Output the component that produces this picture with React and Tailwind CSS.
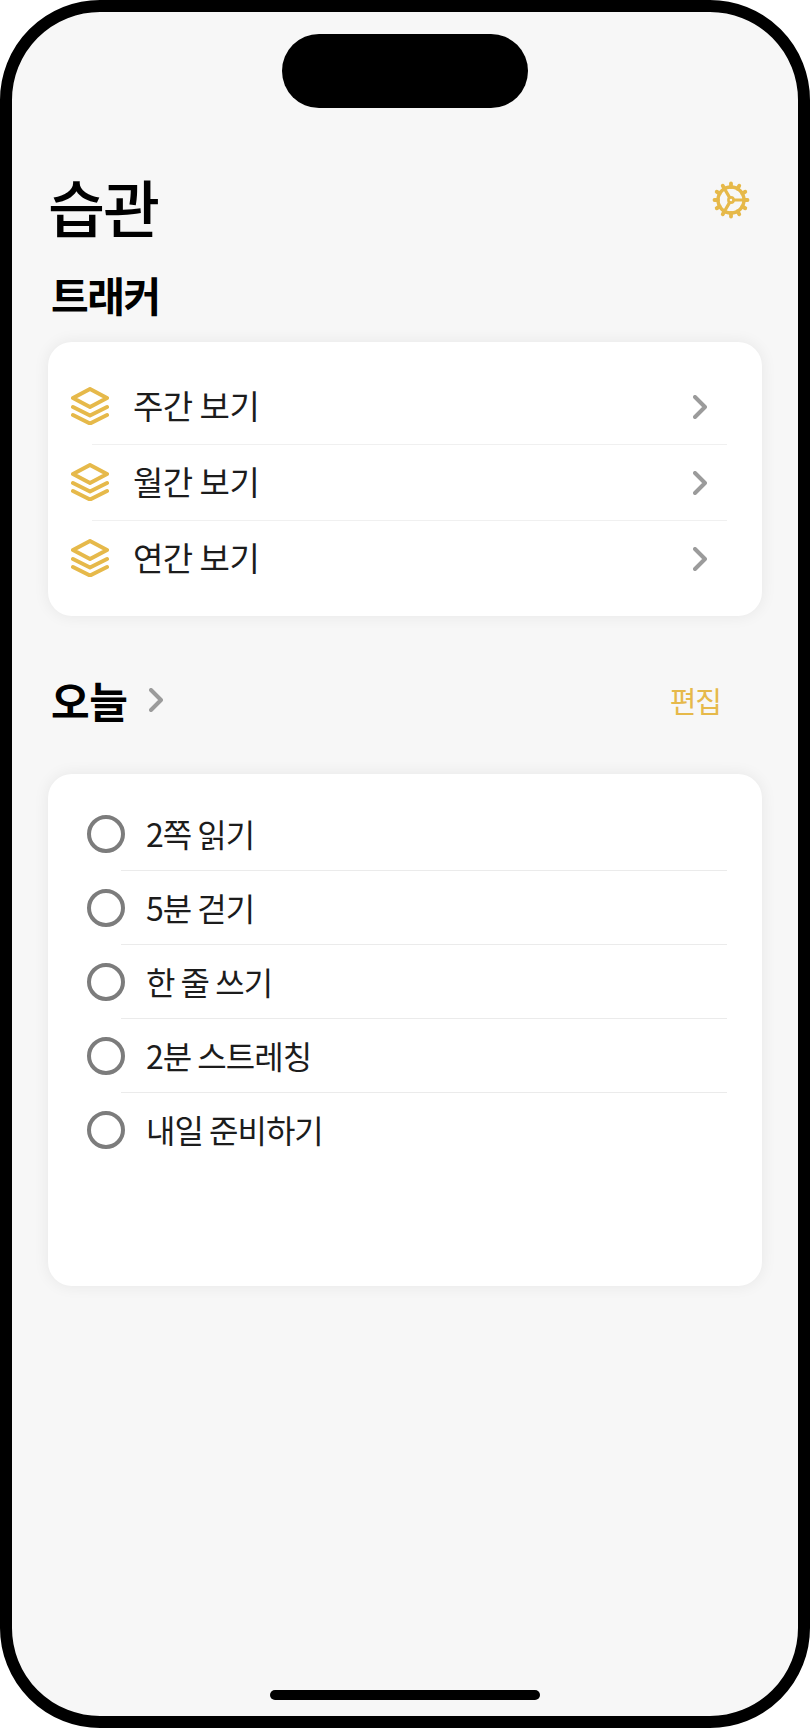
const GOLD = '#e6b94a'

function Gear() {
  const teeth = [...Array(12)].map((_, i) => i * 30)
  return (
    <svg width="38" height="38" viewBox="0 0 38 38" fill="none" stroke={GOLD} strokeLinecap="round">
      <circle cx="19" cy="19" r="13" strokeWidth="3.4" />
      {teeth.map(a => (
        <line key={a} x1="19" y1="2.5" x2="19" y2="6" strokeWidth="3.8" transform={`rotate(${a} 19 19)`} />
      ))}
      <circle cx="19" cy="19" r="2.6" strokeWidth="2.6" />
      <line x1="22" y1="19" x2="32" y2="19" strokeWidth="3.2" />
      <line x1="17.5" y1="16.4" x2="12.5" y2="7.8" strokeWidth="3.2" />
      <line x1="17.5" y1="21.6" x2="12.5" y2="30.2" strokeWidth="3.2" />
    </svg>
  )
}

function Layers() {
  return (
    <svg width="38" height="38" viewBox="0 0 38 38" fill="none" stroke={GOLD} strokeWidth="4" strokeLinecap="round" strokeLinejoin="round" className="mb-[2px] shrink-0">
      <path d="M19 2 L36 11 L19 20 L2 11 Z" />
      <path d="M2 20 L19 28.5 L36 20" />
      <path d="M2 28 L19 36.5 L36 28" />
    </svg>
  )
}

function Chevron() {
  return (
    <svg width="14" height="24" viewBox="0 0 14 24" fill="none" stroke="#9b9b9b" strokeWidth="4" strokeLinecap="round" strokeLinejoin="round">
      <path d="M2 2 L12 12 L2 22" />
    </svg>
  )
}

const views = ['주간 보기', '월간 보기', '연간 보기']
const habits = ['2쪽 읽기', '5분 걷기', '한 줄 쓰기', '2분 스트레칭', '내일 준비하기']

export default function App() {
  return (
    <div
      className="relative h-[1728px] w-[810px] overflow-hidden rounded-[100px] border-[12px] border-black bg-[#f7f7f7]"
      style={{ fontFamily: '"Noto Sans CJK KR", "Noto Sans", sans-serif' }}
    >
      {/* Dynamic island */}
      <div className="absolute left-[270px] top-[22px] h-[74px] w-[246px] rounded-[37px] bg-black" />

      <div className="flex flex-col px-[36px] pt-[158px]">
        {/* Header */}
        <div className="flex items-start justify-between">
          <h1 className="text-[62px] leading-[72px] font-medium tracking-[-2px] text-black">습관</h1>
          <div className="mr-[12px] mt-[11px]"><Gear /></div>
        </div>
        <h2 className="ml-[3px] mt-[24px] text-[41px] leading-[56px] font-bold tracking-[-1.5px] text-black">트래커</h2>

        {/* Tracker card */}
        <div className="mt-[20px] h-[274px] rounded-[24px] bg-white py-[27px] pl-[23px] pr-[35px] shadow-[0_0_16px_rgba(0,0,0,0.07)]">
          {views.map((label, i) => (
            <div key={label} className="relative flex h-[76px] items-center">
              <Layers />
              <span className="mb-[4px] ml-[24px] text-[33px] leading-[44px] tracking-[-0.5px] text-[#1c1c1c]">{label}</span>
              <div className="ml-auto mr-[20px] flex"><Chevron /></div>
              {i < views.length - 1 && <div className="absolute bottom-0 left-[21px] right-0 h-[1px] bg-[#f0f0f0]" />}
            </div>
          ))}
        </div>

        {/* Today header */}
        <div className="mt-[56px] flex h-[56px] items-center">
          <h2 className="ml-[3px] text-[42px] leading-[56px] font-bold tracking-[-0.5px] text-black">오늘</h2>
          <div className="ml-[22px] flex"><Chevron /></div>
          <span className="ml-auto mr-[41px] text-[29px] leading-[40px] tracking-[-1px] text-[#e6b94a]">편집</span>
        </div>

        {/* Habit card */}
        <div className="mt-[46px] h-[512px] rounded-[24px] bg-white pl-[39px] pr-[35px] pt-[23px] shadow-[0_0_16px_rgba(0,0,0,0.07)]">
          {habits.map((habit, i) => (
            <div key={habit} className="relative flex h-[74px] items-center">
              <div className="h-[38px] w-[38px] shrink-0 rounded-full border-[4px] border-[#7c7c7c]" />
              <span className="mb-[3px] ml-[21px] text-[32px] leading-[44px] tracking-[-1px] text-[#1c1c1c]">{habit}</span>
              {i < habits.length - 1 && <div className="absolute bottom-0 left-[34px] right-0 h-[1px] bg-[#ebebeb]" />}
            </div>
          ))}
        </div>
      </div>

      {/* Home indicator */}
      <div className="absolute bottom-[16px] left-[258px] h-[10px] w-[270px] rounded-full bg-black" />
    </div>
  )
}
